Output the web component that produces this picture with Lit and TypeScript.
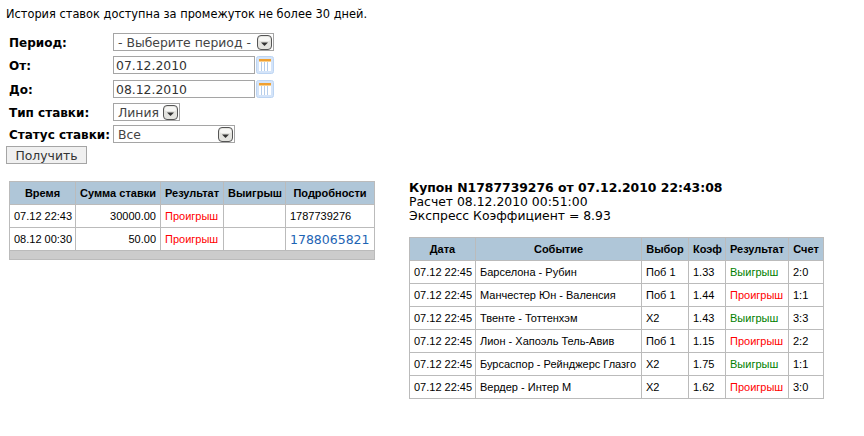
import { css, html, LitElement } from "lit";
import { customElement } from "lit/decorators.js";

const bets = [
  { time: "07.12 22:43", sum: "30000.00", result: "Проигрыш", win: "", id: "1787739276", link: false },
  { time: "08.12 00:30", sum: "50.00", result: "Проигрыш", win: "", id: "1788065821", link: true },
];

const events = [
  ["Барселона - Рубин", "Поб 1", "1.33", "Выигрыш", "2:0"],
  ["Манчестер Юн - Валенсия", "Поб 1", "1.44", "Проигрыш", "1:1"],
  ["Твенте - Тоттенхэм", "Х2", "1.43", "Выигрыш", "3:3"],
  ["Лион - Хапоэль Тель-Авив", "Поб 1", "1.15", "Проигрыш", "2:2"],
  ["Бурсаспор - Рейнджерс Глазго", "Х2", "1.75", "Выигрыш", "1:1"],
  ["Вердер - Интер М", "Х2", "1.62", "Проигрыш", "3:0"],
];

const arrow = html`<svg class="arrow" width="15" height="15" viewBox="0 0 15 15">
  <rect x="0.5" y="0.5" width="14" height="14" rx="3.5" fill="#e4e4e0" stroke="#555" />
  <rect x="2" y="2" width="11" height="4" rx="1.5" fill="#f7f7f5" />
  <path d="M4 7.5h7L7.5 11z" fill="#333" />
</svg>`;

const calendar = html`<svg class="cal" width="18" height="18" viewBox="0 0 18 18">
  <rect x="0.5" y="0.5" width="17" height="17" rx="2" fill="#d4e4f9" stroke="#bcd4f2" />
  <rect x="3" y="3" width="12" height="2" fill="#f0a030" />
  <rect x="3" y="5" width="12" height="1" fill="#f8d090" />
  <rect x="3" y="6" width="12" height="9" fill="#fff" />
  <path d="M5.5 6v9M8.5 6v9M11.5 6v9" stroke="#b5cdea" />
</svg>`;

@customElement("app-root")
class AppRoot extends LitElement {
  render() {
    return html`
      <p class="note">История ставок доступна за промежуток не более 30 дней.</p>
      <div class="form">
        <label>Период:</label>
        <div class="select wide"><span>- Выберите период -</span>${arrow}</div>
        <label>От:</label>
        <div class="date"><input type="text" .value=${"07.12.2010"} />${calendar}</div>
        <label>До:</label>
        <div class="date"><input type="text" .value=${"08.12.2010"} />${calendar}</div>
        <label>Тип ставки:</label>
        <div class="select"><span>Линия</span>${arrow}</div>
        <label>Статус ставки:</label>
        <div class="select status"><span>Все</span>${arrow}</div>
      </div>
      <button class="submit">Получить</button>
      <div class="columns">
        <table class="bets">
          <thead>
            <tr>
              <th class="b1">Время</th>
              <th class="b2">Сумма ставки</th>
              <th class="b3">Результат</th>
              <th class="b4">Выигрыш</th>
              <th class="b5">Подробности</th>
            </tr>
          </thead>
          <tbody>
            ${bets.map(
              (b) => html`<tr>
                <td>${b.time}</td>
                <td class="num">${b.sum}</td>
                <td class="lose">${b.result}</td>
                <td>${b.win}</td>
                <td>${b.link ? html`<a href="#">${b.id}</a>` : b.id}</td>
              </tr>`
            )}
          </tbody>
          <tfoot>
            <tr><td colspan="5"></td></tr>
          </tfoot>
        </table>
        <div class="coupon">
          <div class="title">Купон N1787739276 от 07.12.2010 22:43:08</div>
          <div>Расчет 08.12.2010 00:51:00</div>
          <div>Экспресс Коэффициент = 8.93</div>
          <table class="events">
            <thead>
              <tr>
                <th class="e1">Дата</th>
                <th class="e2">Событие</th>
                <th class="e3">Выбор</th>
                <th class="e4">Коэф</th>
                <th class="e5">Результат</th>
                <th class="e6">Счет</th>
              </tr>
            </thead>
            <tbody>
              ${events.map(
                (e) => html`<tr>
                  <td>07.12 22:45</td>
                  <td>${e[0]}</td>
                  <td>${e[1]}</td>
                  <td>${e[2]}</td>
                  <td class=${e[3] === "Выигрыш" ? "win" : "lose"}>${e[3]}</td>
                  <td>${e[4]}</td>
                </tr>`
              )}
            </tbody>
          </table>
        </div>
      </div>
    `;
  }

  static styles = css`
    :host {
      display: block;
      height: 436px;
      background: #fff;
      color: #000;
      font-family: "DejaVu Sans", Verdana, sans-serif;
      font-size: 12px;
      overflow: hidden;
    }
    .note {
      margin: 0;
      padding: 7px 6px 0;
      height: 33px;
      box-sizing: border-box;
      font-size: 11.4px;
      line-height: 14px;
    }
    .form {
      display: grid;
      grid-template-columns: 104px auto;
      grid-template-rows: 23px 24px 23px 22px 21px;
      justify-content: start;
      justify-items: start;
      align-items: start;
      margin-left: 9px;
    }
    label {
      font-weight: bold;
      line-height: 20px;
    }
    .select {
      display: flex;
      align-items: center;
      justify-content: space-between;
      box-sizing: border-box;
      height: 18px;
      border: 1px solid #a5a5a5;
      padding: 0 1px 0 4px;
      color: #444;
      font-size: 12.4px;
      background: #fff;
    }
    .select.wide {
      width: 161px;
    }
    .select.status {
      width: 122px;
    }
    .select span {
      margin-right: 4px;
    }
    .arrow {
      flex: none;
    }
    .date {
      display: flex;
      align-items: center;
      gap: 1px;
    }
    .date input {
      box-sizing: border-box;
      width: 142px;
      height: 18px;
      margin: 0;
      padding: 0 2px;
      border: 1px solid #a5a5a5;
      font: inherit;
      font-size: 12.4px;
      color: #333;
      outline: none;
    }
    .submit {
      display: block;
      box-sizing: border-box;
      width: 81px;
      height: 18px;
      margin: 0 0 0 6px;
      padding: 0;
      border: 1px solid #a5a5a5;
      background: #f0f0f0;
      font: inherit;
      font-size: 12.4px;
      color: #333;
    }
    .columns {
      display: flex;
      align-items: flex-start;
      gap: 34px;
      margin: 17px 0 0 9px;
    }
    table {
      border-collapse: collapse;
      table-layout: fixed;
      font-family: "Liberation Sans", Arial, sans-serif;
      font-size: 11px;
    }
    th,
    td {
      box-sizing: border-box;
      height: 23px;
      padding: 0 4px;
      border: 1px solid #bbb;
      white-space: nowrap;
    }
    th {
      background: #afc6d8;
      font-weight: bold;
      text-align: center;
    }
    .num {
      text-align: right;
    }
    .lose {
      color: #f00;
    }
    .win {
      color: #008000;
    }
    a {
      color: #1e64b4;
      font-family: "DejaVu Sans", Verdana, sans-serif;
      font-size: 12.5px;
      text-decoration: none;
    }
    .bets {
      width: 365px;
    }
    tfoot td {
      height: 9px;
      background: #cccccc;
    }
    .b1 { width: 66px; }
    .b2 { width: 85px; }
    .b3 { width: 63px; }
    .b4 { width: 62px; }
    .b5 { width: 89px; }
    .coupon {
      line-height: 14px;
      font-size: 12.4px;
    }
    .title {
      font-weight: bold;
    }
    .events {
      width: 414px;
      margin-top: 14px;
      line-height: normal;
    }
    .e1 { width: 66px; }
    .e2 { width: 166px; }
    .e3 { width: 47px; }
    .e4 { width: 37px; }
    .e5 { width: 63px; }
    .e6 { width: 35px; }
  `;
}
